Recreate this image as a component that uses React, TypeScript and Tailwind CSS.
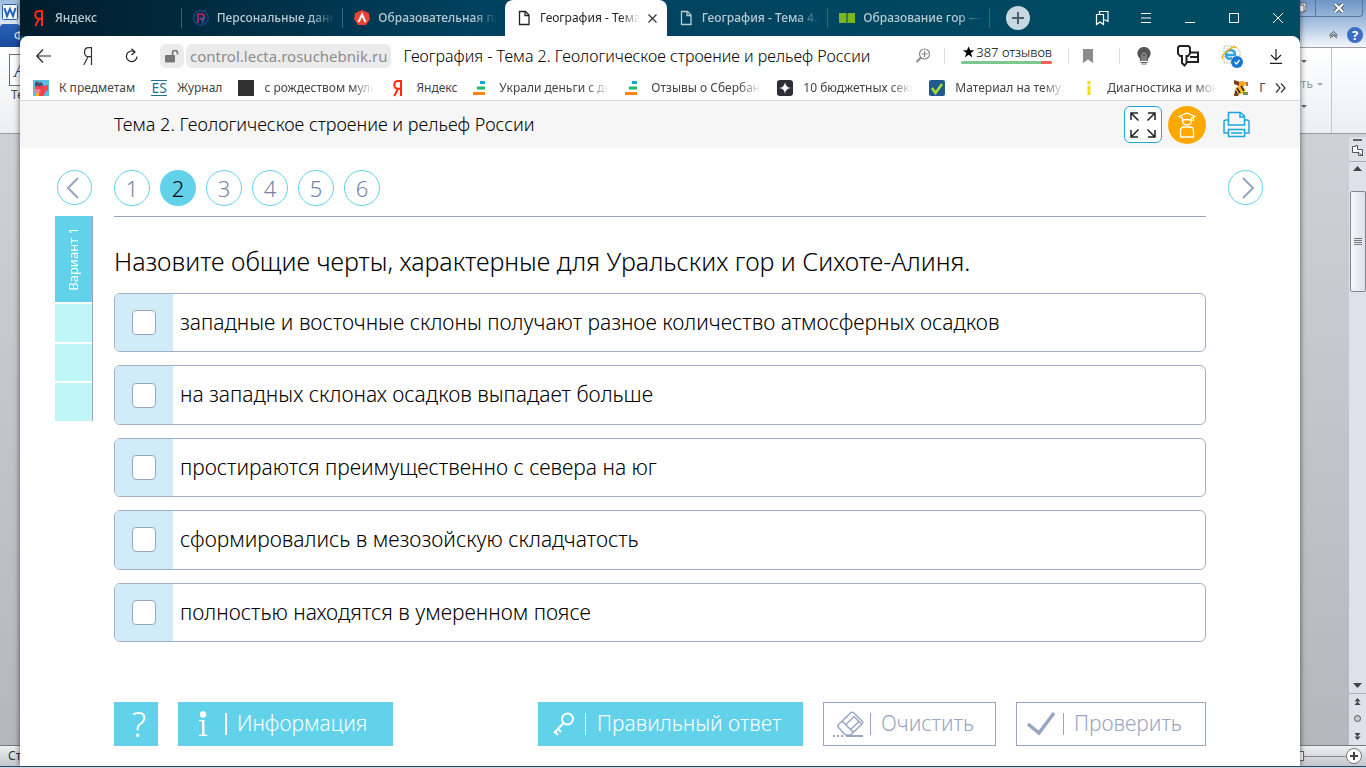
import type { ReactNode } from "react";

type Tab = { title: string; icon: ReactNode; active?: boolean; divider?: boolean };
type Bookmark = { title: string; icon: ReactNode };

function PageIcon() {
  return (
    <svg width="16" height="16" viewBox="0 0 16 16" fill="none" stroke="currentColor" strokeWidth="1.3">
      <path d="M3.5 1.5h6l3.5 3.5v9.500h-9.500z" />
      <path d="M9 1.500v4h4" />
    </svg>
  );
}

function YandexIcon() {
  return (
    <svg width="16" height="18" viewBox="0 0 16 18" fill="none" stroke="#ff2a12" strokeWidth="2">
      <path d="M11 17V2H8.200C5.600 2 4.300 3.600 4.300 5.800S5.700 9.700 8 9.700h3M8 9.700 4.300 17" />
    </svg>
  );
}

function SravniIcon() {
  return (
    <svg width="16" height="16" viewBox="0 0 16 16">
      <rect x="7" y="1" width="5" height="3" fill="#1ba1e8" />
      <rect x="4" y="6.500" width="8" height="3" fill="#25b56d" />
      <rect x="0" y="12" width="12" height="3" fill="#ff8412" />
    </svg>
  );
}

const tabs: Tab[] = [
  { title: "Яндекс", icon: <YandexIcon />, divider: true },
  {
    title: "Персональные данные",
    divider: true,
    icon: (
      <svg width="16" height="16" viewBox="0 0 16 16" fill="none">
        <circle cx="8" cy="8" r="7.300" stroke="#17488c" strokeWidth="1.200" />
        <path d="M5 13V4h3.500a2.400 2.400 0 0 1 0 5H6.500" stroke="#c02768" strokeWidth="1.600" />
        <path d="m7.500 7.500 2.500 4M12 7l-3 6.500" stroke="#2b5fb0" strokeWidth="1.300" />
      </svg>
    ),
  },
  {
    title: "Образовательная платформа",
    icon: (
      <svg width="16" height="16" viewBox="0 0 16 16">
        <path d="m8 0 7 3.300.8 6.200L12 15H4L.2 9.500 1 3.300z" fill="#ee4037" />
        <path d="M4.500 12 8 4.500l3.500 7.500" fill="none" stroke="#fff" strokeWidth="2" />
      </svg>
    ),
  },
  { title: "География - Тема 2. Геологическое", icon: <PageIcon />, active: true },
  { title: "География - Тема 4. Климат", icon: <PageIcon />, divider: true },
  {
    title: "Образование гор — урок",
    divider: true,
    icon: (
      <svg width="16" height="16" viewBox="0 0 16 16" fill="#78b51e">
        <path d="M0 3h7l.5.800v9.700L7 13H0zM16 3H9l-.5.800v9.700L9 13h7z" />
      </svg>
    ),
  },
];

const bookmarks: Bookmark[] = [
  {
    title: "К предметам",
    icon: (
      <svg width="16" height="16" viewBox="0 0 16 16">
        <path d="M0 0h16v16H0z" fill="#5bbde0" />
        <path d="M2 6V3l2-2 2 2 2-1 2 2v3z" fill="#4b4f74" />
        <path d="M2 6h8l5-1v5l-3 2-1 4H3z" fill="#ee4453" />
        <path d="M1 9h5l2 2-2 2H2z" fill="#ff7d86" />
        <path d="M3 13h3v3H3z" fill="#ffb02e" />
      </svg>
    ),
  },
  {
    title: "Журнал",
    icon: (
      <span className="flex h-4 w-4 items-center justify-center border-y border-[#1c7390] text-[14px] leading-none text-[#1c7390]">
        ES
      </span>
    ),
  },
  { title: "с рождеством мультфильм", icon: <span className="block h-4 w-4 bg-[#303030]" /> },
  { title: "Яндекс", icon: <YandexIcon /> },
  { title: "Украли деньги с дебетовой карты", icon: <SravniIcon /> },
  { title: "Отзывы о Сбербанке России", icon: <SravniIcon /> },
  {
    title: "10 бюджетных секретов",
    icon: (
      <svg width="16" height="16" viewBox="0 0 16 16">
        <rect width="16" height="16" rx="3" fill="#2b2e38" />
        <path d="M8 2q.5 5.500 6 6-5.500.5-6 6-.5-5.500-6-6 5.500-.5 6-6z" fill="#fff" />
      </svg>
    ),
  },
  {
    title: "Материал на тему: занятие",
    icon: (
      <svg width="16" height="16" viewBox="0 0 16 16">
        <rect width="16" height="16" rx="2" fill="#205a8c" />
        <path d="m3 8 3.500 5L13 4" fill="none" stroke="#a6dc3a" strokeWidth="2.500" />
      </svg>
    ),
  },
  {
    title: "Диагностика и мониторинг",
    icon: (
      <svg width="16" height="16" viewBox="0 0 16 16" fill="#f3df16">
        <path d="M6.500 1h3v3h-3zM6.500 5.500h3V15h-3z" />
      </svg>
    ),
  },
  {
    title: "Г",
    icon: (
      <svg width="16" height="16" viewBox="0 0 16 16">
        <path d="m1 0 6 2-1 4-5-2zM1 14l3-4 3 2-2 4H1z" fill="#8a3b17" />
        <circle cx="9" cy="4" r="3" fill="#f1a619" />
        <ellipse cx="7" cy="10" rx="5" ry="4" fill="#f6bb22" />
        <path d="m4 8 3 5M8 6l3 5M2 11l2 2" stroke="#302012" strokeWidth="1.500" />
        <path d="M10 12h5v3h-5z" fill="#6a9a2c" />
        <path d="M12 2h3v4h-2z" fill="#bb713d" />
      </svg>
    ),
  },
];

const answers = [
  "западные и восточные склоны получают разное количество атмосферных осадков",
  "на западных склонах осадков выпадает больше",
  "простираются преимущественно с севера на юг",
  "сформировались в мезозойскую складчатость",
  "полностью находятся в умеренном поясе",
];

function TabStrip() {
  return (
    <div className="flex h-9 bg-linear-to-r from-[#001d2b] via-[#00415f] via-35% to-[#004c63]">
      <div className="grid max-w-[970px] flex-1 grid-cols-6">
        {tabs.map((tab) => (
          <div
            key={tab.title}
            className={
              tab.active
                ? "relative flex min-w-0 items-center gap-2 rounded-t-lg bg-white pr-[10px] pl-[11px] text-[#222]"
                : "relative flex min-w-0 items-center gap-2 pr-2 pl-[11px] font-medium text-[#b9cad3]"
            }
          >
            <span className="shrink-0">{tab.icon}</span>
            <a
              href="#"
              className="min-w-0 flex-1 overflow-hidden mask-r-from-80% mask-r-to-100% text-[12px] whitespace-nowrap"
            >
              {tab.title}
            </a>
            {tab.active && (
              <button aria-label="Закрыть вкладку">
                <svg width="9" height="9" viewBox="0 0 9 9" stroke="#333" strokeWidth="1.200">
                  <path d="m.5.5 8 8M8.500.5l-8 8" />
                </svg>
              </button>
            )}
            {tab.divider && <span className="absolute top-2 right-0 h-5 w-px bg-[#3a6579]" />}
          </div>
        ))}
      </div>
      <div className="mr-auto flex items-center pl-4">
        <button
          aria-label="Новая вкладка"
          className="flex h-6 w-6 items-center justify-center rounded-full bg-[#c8d8df] text-[#4b5f6b]"
        >
          <svg width="12" height="12" viewBox="0 0 12 12" stroke="currentColor" strokeWidth="2">
            <path d="M6 0v12M0 6h12" />
          </svg>
        </button>
      </div>
      <div className="flex items-center text-white">
        <button aria-label="Закладки" className="flex w-11 justify-center">
          <svg width="14" height="16" viewBox="0 0 14 16" fill="none" stroke="currentColor" strokeWidth="1.200">
            <path d="M1.500 4.500h7v10L5 12l-3.500 2.500z" />
            <path d="M4.500 4.500v-3H13v10l-2.500-1.500H8.500" />
          </svg>
        </button>
        <button aria-label="Меню" className="flex w-11 justify-center">
          <svg width="10" height="10" viewBox="0 0 10 10" stroke="currentColor">
            <path d="M0 .5h10M0 5h10M0 9.500h10" />
          </svg>
        </button>
        <button aria-label="Свернуть" className="flex w-11 justify-center">
          <svg width="10" height="10" viewBox="0 0 10 10" stroke="currentColor">
            <path d="M0 9.500h10" />
          </svg>
        </button>
        <button aria-label="Развернуть" className="flex w-11 justify-center">
          <svg width="10" height="10" viewBox="0 0 10 10" fill="none" stroke="currentColor">
            <path d="M.5.5h9v9h-9z" />
          </svg>
        </button>
        <button aria-label="Закрыть" className="flex w-11 justify-center">
          <svg width="10" height="10" viewBox="0 0 10 10" stroke="currentColor">
            <path d="m0 0 10 10M10 0 0 10" />
          </svg>
        </button>
      </div>
    </div>
  );
}

function Toolbar() {
  return (
    <div className="flex h-10 items-center">
      <button aria-label="Назад" className="ml-[2px] flex w-11 justify-center">
        <svg width="16" height="14" viewBox="0 0 16 14" fill="none" stroke="#222" strokeWidth="1.200">
          <path d="M7 .5.800 7 7 13.500M1 7h14" />
        </svg>
      </button>
      <button aria-label="Яндекс" className="flex w-11 justify-center">
        <svg width="10" height="18" viewBox="0 0 10 18" fill="none" stroke="#333" strokeWidth="1.200">
          <path d="M8.500 18V.7H5.500C3 .7 1.500 2.500 1.500 5.300S3 9.700 5.500 9.700h3M5 9.700.8 18" />
        </svg>
      </button>
      <button aria-label="Обновить" className="flex w-11 justify-center">
        <svg width="14" height="16" viewBox="0 0 14 16" fill="none" stroke="#222" strokeWidth="1.200">
          <path d="M9.500 3.800A5.300 5.300 0 1 0 12 8.500" />
          <path d="M6.500.8 10 4 6.500 7" />
        </svg>
      </button>
      <div className="ml-[6px] flex h-6 w-6 items-center justify-center rounded-md bg-[#ebebeb]">
        <svg width="14" height="14" viewBox="0 0 14 14">
          <rect x="0" y="6" width="10" height="7.500" rx="1" fill="#777" />
          <path d="M7.500 6V4a2.500 2.500 0 0 1 5 0v1.500" fill="none" stroke="#777" strokeWidth="1.600" />
        </svg>
      </div>
      <span className="ml-[2px] flex h-6 items-center rounded-md bg-[#ebebeb] px-1 text-[15px] text-[#8c8c8c]">
        control.lecta.rosuchebnik.ru
      </span>
      <span className="ml-3 flex-1 overflow-hidden text-[16px] font-light whitespace-nowrap text-black">
        География - Тема 2. Геологическое строение и рельеф России
      </span>
      <button aria-label="Масштаб" className="mr-[13px]">
        <svg width="16" height="16" viewBox="0 0 16 16" fill="none" stroke="#888" strokeWidth="1.200">
          <circle cx="9.500" cy="6" r="5" />
          <path d="M9.500 3v6M6.500 6h6" />
          <path d="m6 9.500-4.500 4.500" strokeWidth="2" />
        </svg>
      </button>
      <span className="h-4 w-px bg-[#ddd]" />
      <button className="-mt-[5px] ml-4 flex w-[91px] flex-col text-[13px] leading-[18px] whitespace-nowrap text-black">
        <span className="flex items-center gap-[2px] pl-[2px] font-light">
          <svg width="12" height="12" viewBox="0 0 24 24">
            <path d="m12 0 3.500 8.500H24l-7 5.500 3 10-8-6-8 6 3-10-7-5.500h8.500z" />
          </svg>
          387 отзывов
        </span>
        <span className="flex h-[3px] w-full overflow-hidden rounded-sm bg-[#7bc98f]">
          <span className="ml-auto w-[11px] bg-[#ef6557]" />
        </span>
      </button>
      <span className="ml-4 h-4 w-px bg-[#ddd]" />
      <button aria-label="В закладки" className="flex w-[38px] justify-center">
        <svg width="10" height="14" viewBox="0 0 10 14" fill="#8c8c8c">
          <path d="M0 0h10v14L5 10.500 0 14z" />
        </svg>
      </button>
      <span className="ml-3 h-4 w-px bg-[#ddd]" />
      <button aria-label="Турбо" className="ml-[2px] flex w-11 justify-center">
        <svg width="14" height="18" viewBox="0 0 14 18">
          <path d="M7 0a6.500 6.500 0 0 1 4 11.700V14H3v-2.300A6.500 6.500 0 0 1 7 0z" fill="#555" />
          <path d="M5 14V7.500Q5 6 7 6t2 1.500V14M7 9v5" fill="none" stroke="#aaa" />
          <path d="M3.500 15.500h7M4.500 17h5" stroke="#666" />
        </svg>
      </button>
      <button aria-label="Пароли" className="flex w-11 justify-center">
        <svg width="24" height="24" viewBox="0 0 24 24" fill="none" stroke="#222" strokeWidth="2">
          <path d="M3.500 2h9L14 3.500v6L12 12h-1.500v7L8.500 21.500 6 19v-7H4L2 9.500v-6z" />
          <path d="M8 5.500h.1M14 8.500h8V18H11M14 13h8" />
        </svg>
      </button>
      <button aria-label="Расширение" className="flex w-11 justify-center">
        <svg width="24" height="24" viewBox="0 0 24 24" fill="none">
          <path d="M4 2h11l5 5v12H4z" fill="#fafafa" stroke="#bbb" strokeDasharray="2 1" />
          <path d="M12 14q-5 2-6-2-1-5 4-6 5 0 5 5H7" stroke="#36a3dc" strokeWidth="2.500" />
          <path d="M3 15Q0 13 7 7t9-3" stroke="#efb51b" strokeWidth="1.500" />
          <circle cx="17" cy="18" r="6" fill="#1677d2" />
          <path d="m14.500 18 2 2 3-4" stroke="#fff" strokeWidth="1.300" />
        </svg>
      </button>
      <button aria-label="Загрузки" className="mr-[2px] flex w-11 justify-center">
        <svg width="12" height="15" viewBox="0 0 12 15" fill="none" stroke="#222" strokeWidth="1.200">
          <path d="M6 0v11M1 6l5 5 5-5M0 14.300h12" />
        </svg>
      </button>
    </div>
  );
}

function BookmarksBar() {
  return (
    <div className="flex h-[25px] items-center border-b border-[#d8d8d8] pr-[14px] pl-[13px]">
      <div className="flex min-w-0 flex-1 gap-4 overflow-hidden">
        {bookmarks.map((item, i) => (
          <a key={i} href="#" className="flex shrink-0 items-center gap-[10px] text-[12px] text-[#444]">
            {item.icon}
            <span
              className={
                item.title.length > 15
                  ? "w-[110px] overflow-hidden mask-r-from-80% mask-r-to-100% whitespace-nowrap"
                  : "whitespace-nowrap"
              }
            >
              {item.title}
            </span>
          </a>
        ))}
      </div>
      <button aria-label="Ещё закладки">
        <svg width="11" height="10" viewBox="0 0 11 10" fill="none" stroke="#333" strokeWidth="1.200">
          <path d="m1 .5 4 4.500-4 4.500M6 .5 10 5 6 9.500" />
        </svg>
      </button>
    </div>
  );
}

function LessonHeader() {
  return (
    <header className="flex h-[47px] items-center bg-[#f6f6f6] pr-[50px] pl-[94px]">
      <h1 className="flex-1 text-[18px] font-[350] text-black">Тема 2. Геологическое строение и рельеф России</h1>
      <button
        aria-label="На весь экран"
        className="flex h-[37px] w-[38px] items-center justify-center rounded-md border border-[#1ea7dc] bg-white"
      >
        <svg width="26" height="26" viewBox="0 0 26 26" fill="none" stroke="#222" strokeWidth="1.500">
          <path d="M1 8V1h7M1 1l7.500 7.500M18 1h7v7M25 1l-7.500 7.500M1 18v7h7M1 25l7.500-7.500M18 25h7v-7M25 25l-7.500-7.500" />
        </svg>
      </button>
      <button
        aria-label="Ученик"
        className="ml-[6px] flex h-[38px] w-[38px] items-center justify-center rounded-full bg-[#ffa800]"
      >
        <svg width="18" height="26" viewBox="0 0 18 26" fill="none" stroke="#fff" strokeWidth="1.300">
          <path d="M1 4.500 9 1l8 3.500L13.500 6v2.500q-4.500-2-9 0V6zM15.500 5v4" />
          <path d="M4.500 8.500Q4.500 13 9 13t4.500-4.500" />
          <path d="M2.500 25v-6q0-4 3.500-4h6q3.500 0 3.500 4v6z" />
        </svg>
      </button>
      <button aria-label="Печать" className="ml-[17px]">
        <svg width="27" height="27" viewBox="0 0 27 27" fill="none" stroke="#1ea7dc" strokeWidth="1.500">
          <path d="M5.500 14V1.500h12L21.500 5v9z" />
          <path d="M17 1.500V6h4.500" />
          <path d="M5 9H3q-2 0-2 2v11h4M22 9h2q2 0 2 2v11h-4" />
          <path d="M5.500 18.500h16v7h-16zM8 22h11" />
        </svg>
      </button>
    </header>
  );
}

function QuestionNav() {
  return (
    <div className="flex items-start pt-[22px]">
      <div className="w-[94px] pl-[37px]">
        <button
          aria-label="Предыдущий вопрос"
          className="flex h-[35px] w-[35px] items-center justify-center rounded-full border border-[#5fd0e8] pr-1"
        >
          <svg width="12" height="22" viewBox="0 0 12 22" fill="none" stroke="#98a6c4" strokeWidth="2">
            <path d="M11 1 1 11l10 10" />
          </svg>
        </button>
      </div>
      <nav className="flex flex-1 gap-[10px]">
        {[1, 2, 3, 4, 5, 6].map((n) => (
          <button
            key={n}
            className={
              n === 2
                ? "h-9 w-9 rounded-full bg-[#62d1ea] text-[22px] leading-[36px] font-light text-black"
                : "h-9 w-9 rounded-full border border-[#5fd0e8] text-[22px] leading-[34px] font-light text-[#7683a6]"
            }
          >
            {n}
          </button>
        ))}
      </nav>
      <div className="w-[94px] pl-[22px]">
        <button
          aria-label="Следующий вопрос"
          className="flex h-[35px] w-[35px] items-center justify-center rounded-full border border-[#5fd0e8] pl-1"
        >
          <svg width="12" height="22" viewBox="0 0 12 22" fill="none" stroke="#98a6c4" strokeWidth="2">
            <path d="m1 1 10 10L1 21" />
          </svg>
        </button>
      </div>
    </div>
  );
}

function Variants() {
  return (
    <div className="w-[94px] pl-[35px]">
      <div className="flex w-[38px] flex-col gap-[2px] border-r border-[#98a6c4]">
        <button className="flex h-[86px] items-center justify-center bg-[#62d1ea] text-[13px] text-white">
          <span className="rotate-180 [writing-mode:vertical-rl]">Вариант 1</span>
        </button>
        <button aria-label="Вариант 2" className="h-[38px] bg-[#c1f6f6]" />
        <button aria-label="Вариант 3" className="h-[37px] bg-[#c1f6f6]" />
        <button aria-label="Вариант 4" className="h-[38px] bg-[#c1f6f6]" />
      </div>
    </div>
  );
}

function Question() {
  return (
    <section className="flex-1 border-t border-[#98a6c4]">
      <h2 className="mt-[26px] text-[25px] leading-[36px] font-light text-black">
        Назовите общие черты, характерные для Уральских гор и Сихоте-Алиня.
      </h2>
      <div className="mt-[14px] grid h-[349px] auto-rows-fr gap-[13px]">
        {answers.map((answer) => (
          <label
            key={answer}
            className="flex items-stretch overflow-hidden rounded-md border border-[#a3aec8] text-[21px] font-light text-black"
          >
            <span className="flex w-[58px] items-center justify-center bg-[#d0ecf9]">
              <input
                type="checkbox"
                className="h-[25px] w-6 appearance-none rounded border border-[#98a6c4] bg-white"
              />
            </span>
            <span className="flex items-center pl-[7px]">{answer}</span>
          </label>
        ))}
      </div>
    </section>
  );
}

function Actions() {
  return (
    <footer className="mt-[60px] mb-5 flex h-11 gap-5 px-[94px] text-[21px] font-light whitespace-nowrap">
      <button className="w-11 bg-[#62d1ea] pl-[6px] text-[34px] leading-[44px] text-white">?</button>
      <button className="flex w-[215px] items-center bg-[#62d1ea] pl-5 text-white">
        <svg width="12" height="26" viewBox="0 0 12 26" fill="#fff">
          <circle cx="5" cy="3.500" r="3.200" />
          <path d="M1 9h5.500v14.500l3 .5v1H1v-1l3-.5V10.500L1 10z" />
        </svg>
        <span className="ml-[15px] h-[22px] w-[2px] bg-white" />
        <span className="ml-[10px]">Информация</span>
      </button>
      <button className="ml-auto flex w-[265px] items-center bg-[#62d1ea] pl-[15px] text-white">
        <svg width="22" height="24" viewBox="0 0 22 24" fill="none" stroke="#fff" strokeWidth="2">
          <circle cx="14.500" cy="7" r="5.500" />
          <path d="M10.500 11 1 21M5 17l3 3M2 20l3 3" />
        </svg>
        <span className="ml-[10px] h-[22px] w-px bg-white" />
        <span className="ml-[11px]">Правильный ответ</span>
      </button>
      <button className="flex w-[173px] items-center border border-[#98a6c4] pl-2 text-[#98a6c4]">
        <svg width="32" height="27" viewBox="0 0 32 27" fill="none" stroke="currentColor" strokeWidth="1.500">
          <path d="M7.500 12.500 18.500 2q1.500-1.500 3.500 0l8 8q1.500 1.500 0 3L18.500 24h-5l-7-7.500q-1.500-2 1-4z" />
          <path d="m10 10 11.500 11.500M14 6l1 1M13.500 14l8.500-8.500 7 7M18 19l9-8.500" />
          <path d="M1 25h2M5 25h2M9 25h2M14 25h17" strokeWidth="2" />
        </svg>
        <span className="ml-[6px] h-[22px] w-px bg-[#98a6c4]" />
        <span className="ml-[10px]">Очистить</span>
      </button>
      <button className="flex w-[190px] items-center border border-[#98a6c4] pl-[10px] text-[#98a6c4]">
        <svg width="28" height="24" viewBox="0 0 28 24" fill="none" stroke="currentColor" strokeWidth="3.500">
          <path d="m1 12 11 9L27 1" />
        </svg>
        <span className="ml-2 h-[22px] w-px bg-[#98a6c4]" />
        <span className="ml-[10px]">Проверить</span>
      </button>
    </footer>
  );
}

function WordLeftEdge() {
  return (
    <div className="flex w-5 flex-col overflow-hidden whitespace-nowrap">
      <div className="h-6 bg-linear-to-b from-[#9ebbdc] to-[#dce9f7] pt-1 pl-[2px]">
        <svg width="16" height="16" viewBox="0 0 16 16">
          <rect x=".5" y=".5" width="15" height="15" rx="1" fill="#f4f8fd" stroke="#2a5ca8" />
          <path d="m2.500 4 2.500 8 3-7 3 7 2.500-8" fill="none" stroke="#2a63b5" strokeWidth="2" />
        </svg>
      </div>
      <div className="h-[23px] rounded-t bg-linear-to-b from-[#2a62b8] to-[#174a9c] pl-[14px] text-[12px] leading-[23px] text-white">
        Файл
      </div>
      <div className="h-[87px] border-b border-[#9a9da2] bg-linear-to-b from-white to-[#eceff2] pt-[7px] pl-[9px]">
        <span className="flex h-8 w-8 items-center border border-[#666e80] bg-white pl-1 font-['Liberation_Serif',serif] text-[20px] text-[#234a82] italic">
          A
        </span>
        <span className="block pl-[2px] text-[12px] leading-[18px] text-[#444]">Тема</span>
      </div>
      <div className="flex-1 bg-linear-to-b from-[#ced1d5] to-[#b4b7bc]" />
      <div className="h-[21px] border-t border-[#777c84] bg-linear-to-b from-[#eef0f3] to-[#c2c6cc] pl-2 text-[12px] leading-[20px] text-[#333]">
        Страница
      </div>
    </div>
  );
}

function WordRightEdge() {
  return (
    <div className="flex w-[66px] flex-col overflow-hidden whitespace-nowrap">
      <div className="h-[47px] bg-linear-to-b from-[#6d96c6] via-[#a9c3e0] to-[#f5f7fb]">
        <div className="mr-[3px] flex h-[17px] rounded-br border-r border-b border-[#58779f] text-white">
          <button aria-label="Восстановить" className="w-4 border-r border-[#58779f]">
            <svg width="10" height="12" viewBox="0 0 10 12" fill="none" stroke="#56606e">
              <path d="M0 3h4v7H0M0 1h6v8H4" fill="#fff" />
            </svg>
          </button>
          <button aria-label="Закрыть Word" className="flex flex-1 items-center justify-center">
            <svg width="12" height="10" viewBox="0 0 12 10">
              <path d="m2 1 8 8M10 1 2 9" stroke="#56606e" strokeWidth="4" />
              <path d="m2 1 8 8M10 1 2 9" stroke="#fff" strokeWidth="2" />
            </svg>
          </button>
        </div>
        <div className="flex items-center justify-end gap-[9px] pt-[10px] pr-[3px]">
          <svg width="9" height="8" viewBox="0 0 9 8" fill="none" stroke="#555">
            <path d="m.5 4 4-3.500 4 3.500-1 1-3-2-3 2zM1 7l3.500-2.500L8 7" />
          </svg>
          <button className="h-4 w-4 rounded-full bg-[#3c6fc4] text-[13px] leading-[16px] font-bold text-white">
            ?
          </button>
        </div>
      </div>
      <div className="h-[87px] border-y border-[#9a9da2] bg-linear-to-b from-white to-[#eceff2]">
        <div className="mr-[34px] flex h-full flex-col items-end gap-[13px] border-r border-[#c4c8cd] pt-3 pr-2 text-[12px] leading-[16px] text-[#999]">
          <svg className="mr-4" width="6" height="3" viewBox="0 0 6 3" fill="#666">
            <path d="M0 0h6L3 3z" />
          </svg>
          <span className="flex items-center gap-1">
            Выбрать
            <svg width="6" height="3" viewBox="0 0 6 3" fill="#aaa">
              <path d="M0 0h6L3 3z" />
            </svg>
          </span>
          <svg className="mr-4" width="6" height="3" viewBox="0 0 6 3" fill="#666">
            <path d="M0 0h6L3 3z" />
          </svg>
        </div>
      </div>
      <div className="flex flex-1 justify-end bg-linear-to-b from-[#ced1d5] to-[#b4b7bc] pt-[3px]">
        <div className="flex w-[17px] flex-col items-center bg-[#dce1ea]">
          <span className="mt-[2px] h-[2px] w-[9px] bg-[#666]" />
          <svg className="mt-1" width="12" height="12" viewBox="0 0 12 12" fill="#fff" stroke="#555">
            <path d="M.5 1.500h3v-1h2v4h5v6h-4v-3h-6zM6 7l5 4" />
          </svg>
          <span className="mt-1 h-px w-full bg-[#a9b0bd]" />
          <svg className="mt-1" width="9" height="5" viewBox="0 0 9 5" fill="#444">
            <path d="M0 5h9L4.500 0z" />
          </svg>
          <span className="mt-5 flex h-[101px] w-4 flex-col items-center justify-center gap-px rounded-xs border border-[#7f8794] bg-linear-to-r from-[#f6f7fa] to-[#dbe0e7]">
            <span className="h-px w-2 bg-[#777]" />
            <span className="h-px w-2 bg-[#777]" />
            <span className="h-px w-2 bg-[#777]" />
            <span className="h-px w-2 bg-[#777]" />
          </span>
          <svg className="mt-auto" width="9" height="5" viewBox="0 0 9 5" fill="#444">
            <path d="M0 0h9L4.500 5z" />
          </svg>
          <span className="mt-[5px] h-px w-full bg-[#a9b0bd]" />
          <svg className="mt-1 mb-[5px]" width="9" height="42" viewBox="0 0 9 42" fill="#444">
            <path d="M1.500 3.500h6L4.500 0zM1.500 7h6l-3-3.500zM1.500 35h6l-3 3.500zM1.500 38.500h6l-3 3.500z" />
            <circle cx="4.500" cy="20.500" r="3" fill="#ccc" stroke="#555" />
          </svg>
        </div>
      </div>
      <div className="flex h-[21px] items-center border-t border-[#777c84] bg-linear-to-b from-[#eef0f3] to-[#c2c6cc] pr-1">
        <span className="h-[10px] w-1 border border-l-0 border-[#666] bg-white" />
        <span className="h-px flex-1 bg-[#888]" />
        <button
          aria-label="Крупнее"
          className="flex h-4 w-4 items-center justify-center rounded-full border border-[#777] bg-white"
        >
          <svg width="8" height="8" viewBox="0 0 8 8" stroke="#444" strokeWidth="2">
            <path d="M4 0v8M0 4h8" />
          </svg>
        </button>
      </div>
    </div>
  );
}

export default function App() {
  return (
    <div className="flex min-h-screen flex-col bg-[#ced1d5] font-['Noto_Sans','Open_Sans',sans-serif]">
      <div className="flex flex-1">
        <WordLeftEdge />
        <div className="z-10 flex min-w-0 flex-1 flex-col bg-[#004560] shadow-[0_0_6px_rgba(0,0,0,0.6)]">
          <TabStrip />
          <div className="flex flex-1 flex-col rounded-t-lg bg-white">
            <Toolbar />
            <BookmarksBar />
            <LessonHeader />
            <main className="flex flex-1 flex-col">
              <QuestionNav />
              <div className="mt-[10px] flex pr-[94px]">
                <Variants />
                <Question />
              </div>
              <Actions />
            </main>
          </div>
        </div>
        <WordRightEdge />
      </div>
      <div className="z-20 h-[2px] border-t border-[#33475a] bg-[#c8d9ea]" />
    </div>
  );
}
